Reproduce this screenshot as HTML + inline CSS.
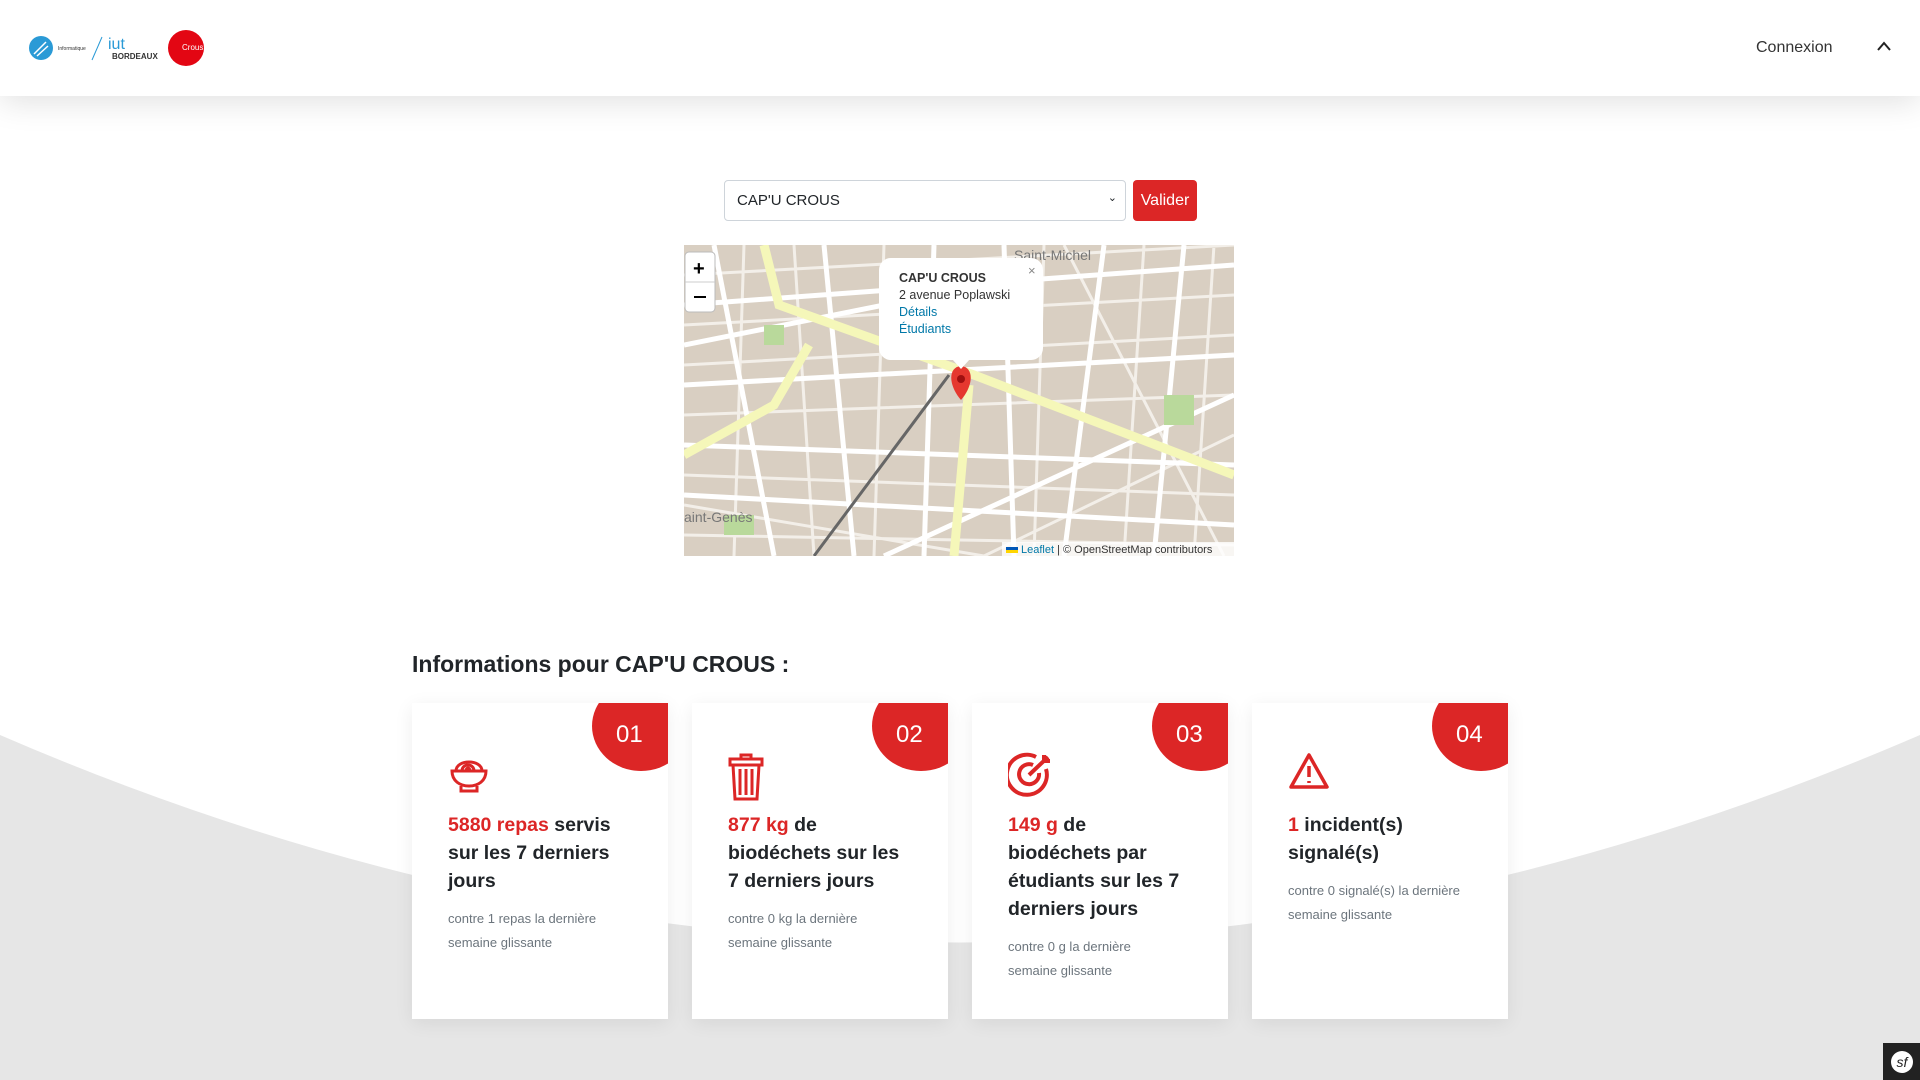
<!DOCTYPE html>
<html><head><meta charset="utf-8"><style>
*{box-sizing:border-box;margin:0;padding:0}
body{width:1920px;height:1080px;overflow:hidden;position:relative;background:#fff;font-family:"Liberation Sans",sans-serif;color:#212529}
.hdr{position:absolute;left:0;top:0;width:1920px;height:96px;background:#fff;box-shadow:0 6px 30px rgba(0,0,0,.12);z-index:5}
.bg{position:absolute;left:0;top:0;z-index:0}
.sel{position:absolute;left:724px;top:180px;width:402px;height:41px;border:1px solid #ced4da;border-radius:4px;background:#fff;font-size:15px;padding:11px 12px;color:#212529;z-index:2}
.btn{position:absolute;left:1133px;top:180px;width:64px;height:41px;background:#dc2626;color:#fff;border-radius:4px;font-size:16px;text-align:center;line-height:41px;z-index:2}
.map{position:absolute;left:684px;top:245px;width:550px;height:311px;overflow:hidden;background:#e0d7cc;z-index:2}
h2{position:absolute;left:412px;top:651px;font-size:23px;font-weight:bold;z-index:2}
.card{position:absolute;top:703px;width:256px;height:316px;background:#fff;overflow:hidden;box-shadow:0 4px 18px rgba(0,0,0,.07);z-index:2}
.badge{position:absolute;right:-22px;top:-22px;width:98px;height:90px;border-radius:50%;background:#dc2626;color:#fff;font-size:24px;padding:40px 0 0 24px}
.ic{position:absolute;left:36px;top:48px}
.t{position:absolute;left:36px;top:108px;width:178px;font-size:19.5px;font-weight:bold;line-height:28px}
.t b{color:#dc2626}
.s{font-size:13px;font-weight:normal;color:#6c757d;line-height:24px;margin-top:12px;width:170px}
</style></head><body>
<svg class="bg" width="1920" height="1080"><path d="M0,735 Q960,1150 1920,735 L1920,1080 L0,1080Z" fill="#e6e6e6"/></svg>
<div class="hdr">
 <svg style="position:absolute;left:28px;top:30px" width="180" height="38">
  <circle cx="13" cy="18" r="12" fill="#2a9ad6"/><path d="M6 24 L18 12 M9 26 L20 16" stroke="#fff" stroke-width="1.5"/>
  <text x="30" y="20" font-size="5" fill="#333" font-family="Liberation Sans">Informatique</text>
  <line x1="64" y1="30" x2="74" y2="7" stroke="#2a9ad6"/>
  <text x="80" y="19" font-size="16" fill="#2a9ad6" font-family="Liberation Sans">iut</text>
  <text x="84" y="29" font-size="8" font-weight="bold" fill="#333" font-family="Liberation Sans">BORDEAUX</text>
  <circle cx="158" cy="18" r="18" fill="#e30613"/><text x="154" y="20" font-size="8" fill="#fff" font-family="Liberation Sans">Crous</text>
 </svg>
 <div style="position:absolute;left:1756px;top:39px;font-size:16px;color:#333">Connexion</div>
 <svg style="position:absolute;left:1876px;top:40px" width="16" height="12"><path d="M2 10 L8 3 L14 10" fill="none" stroke="#222" stroke-width="2"/></svg>
</div>
<div class="sel">CAP'U CROUS<span style="position:absolute;right:8px;top:10px;font-size:11px">&#8964;</span></div>
<div class="btn">Valider</div>
<div class="map">
 <svg width="550" height="311">
  <rect width="550" height="311" fill="#d9cfc2"/>
  <g stroke="#f3efe9" stroke-width="3" fill="none">
   <path d="M0 30 L550 0 M0 80 L550 50 M0 170 L550 150 M0 230 L550 250 M0 290 L550 300 M60 0 L50 311 M110 0 L130 311 M200 0 L190 311 M360 0 L350 311 M460 0 L440 311 M530 0 L510 311 M0 120 L550 90 M0 260 L300 311 M300 311 L550 190 M380 0 L540 311"/>
  </g>
  <g stroke="#fff" stroke-width="5" fill="none">
   <path d="M0 60 L550 20 M0 140 L550 110 M0 200 L550 220 M0 250 L550 280 M30 0 L90 311 M140 0 L170 311 M250 0 L240 311 M320 0 L330 311 M420 0 L380 311 M500 0 L470 311 M0 100 L300 40 M200 311 L550 150"/>
  </g>
  <g stroke="#f5f7b9" stroke-width="9" fill="none">
   <path d="M80 0 L95 60 L290 130 L550 230 M0 210 L90 160 L125 100 M285 140 L270 311"/>
  </g>
  <path d="M130 311 L265 130" stroke="#666" stroke-width="3"/>
  <g fill="#b9d99b"><rect x="80" y="80" width="20" height="20"/><rect x="480" y="150" width="30" height="30"/><rect x="40" y="270" width="30" height="20"/></g>
  <text x="330" y="15" font-size="14" fill="#777" font-family="Liberation Sans">Saint-Michel</text>
  <text x="0" y="277" font-size="14" fill="#777" font-family="Liberation Sans">aint-Genès</text>
  <rect x="1" y="7" width="30" height="60" rx="4" fill="#fff" stroke="#bbb"/>
  <text x="9" y="30" font-size="20" font-weight="bold" font-family="Liberation Sans">+</text>
  <line x1="1" y1="37" x2="31" y2="37" stroke="#ccc"/><line x1="10" y1="52" x2="22" y2="52" stroke="#000" stroke-width="2"/>
  <path d="M277 155 C264 140 264 122 277 121 C290 122 290 140 277 155Z" fill="#e5382f"/><circle cx="277" cy="134" r="4" fill="#a01010"/>
  <rect x="195" y="13" width="164" height="102" rx="12" fill="#fff"/><path d="M268 114 L277 124 L286 114Z" fill="#fff"/>
  <text x="344" y="30" font-size="13" fill="#888">×</text>
  <text x="215" y="37" font-size="12.5" font-weight="bold" fill="#333" font-family="Liberation Sans">CAP'U CROUS</text>
  <text x="215" y="54" font-size="12.5" fill="#333" font-family="Liberation Sans">2 avenue Poplawski</text>
  <text x="215" y="71" font-size="12.5" fill="#0078a8" font-family="Liberation Sans">Détails</text>
  <text x="215" y="88" font-size="12.5" fill="#0078a8" font-family="Liberation Sans">Étudiants</text>
  <rect x="318" y="297" width="232" height="14" fill="rgba(255,255,255,.8)"/>
  <rect x="322" y="302" width="12" height="6" fill="#ffd500"/><rect x="322" y="302" width="12" height="3" fill="#0057b7"/>
  <text x="337" y="308" font-size="11" fill="#333" font-family="Liberation Sans"><tspan fill="#0078a8">Leaflet</tspan> | © OpenStreetMap contributors</text>
 </svg>
</div>
<h2>Informations pour CAP'U CROUS :</h2>
<div class="card" style="left:412px"><div class="badge">01</div>
 <svg class="ic" width="42" height="42" viewBox="0 0 42 42" fill="none" stroke="#dc2626" stroke-width="3"><path d="M4 20 H38 C38 30 30 35 21 35 C12 35 4 30 4 20Z M13 35 V40 H29 V35 M8 20 C8 8 34 8 34 20 M14 20 C14 12 26 12 26 20 M18 20 C18 16 22 16 22 20"/></svg>
 <div class="t"><b>5880 repas</b> servis sur les 7 derniers jours<div class="s">contre 1 repas la dernière semaine glissante</div></div></div>
<div class="card" style="left:692px"><div class="badge">02</div>
 <svg class="ic" width="42" height="50" viewBox="0 0 42 50" fill="none" stroke="#dc2626" stroke-width="3"><path d="M2 8 H34 V14 H2Z M13 8 V4 H23 V8 M5 14 L7 48 H29 L31 14 M12 18 V44 M18 18 V44 M24 18 V44"/></svg>
 <div class="t"><b>877 kg</b> de biodéchets sur les 7 derniers jours<div class="s">contre 0 kg la dernière semaine glissante</div></div></div>
<div class="card" style="left:972px"><div class="badge">03</div>
 <svg class="ic" width="48" height="48" viewBox="0 0 48 48" fill="none" stroke="#dc2626" stroke-width="4"><path d="M38 18 A20 20 0 1 1 28 6 M31 22 A10 10 0 1 1 25 14 M21 24 L40 6 M36 4 V10 H42"/></svg>
 <div class="t" style="width:190px"><b>149 g</b> de<br>biodéchets par étudiants sur les 7 derniers jours<div class="s">contre 0 g la dernière semaine glissante</div></div></div>
<div class="card" style="left:1252px"><div class="badge">04</div>
 <svg class="ic" width="42" height="42" viewBox="0 0 42 42" fill="none" stroke="#dc2626" stroke-width="3.5" stroke-linejoin="round"><path d="M21 4 L39 36 H3Z M21 15 V26 M21 30 V32"/></svg>
 <div class="t"><b>1</b> incident(s) signalé(s)<div class="s" style="width:190px">contre 0 signalé(s) la dernière semaine glissante</div></div></div>
<div style="position:absolute;left:1883px;top:1043px;width:37px;height:37px;background:#222;z-index:3"><div style="position:absolute;left:8px;top:8px;width:22px;height:22px;border-radius:50%;background:#fff;color:#222;font-size:14px;font-style:italic;text-align:center;line-height:22px">sf</div></div>
</body></html>
